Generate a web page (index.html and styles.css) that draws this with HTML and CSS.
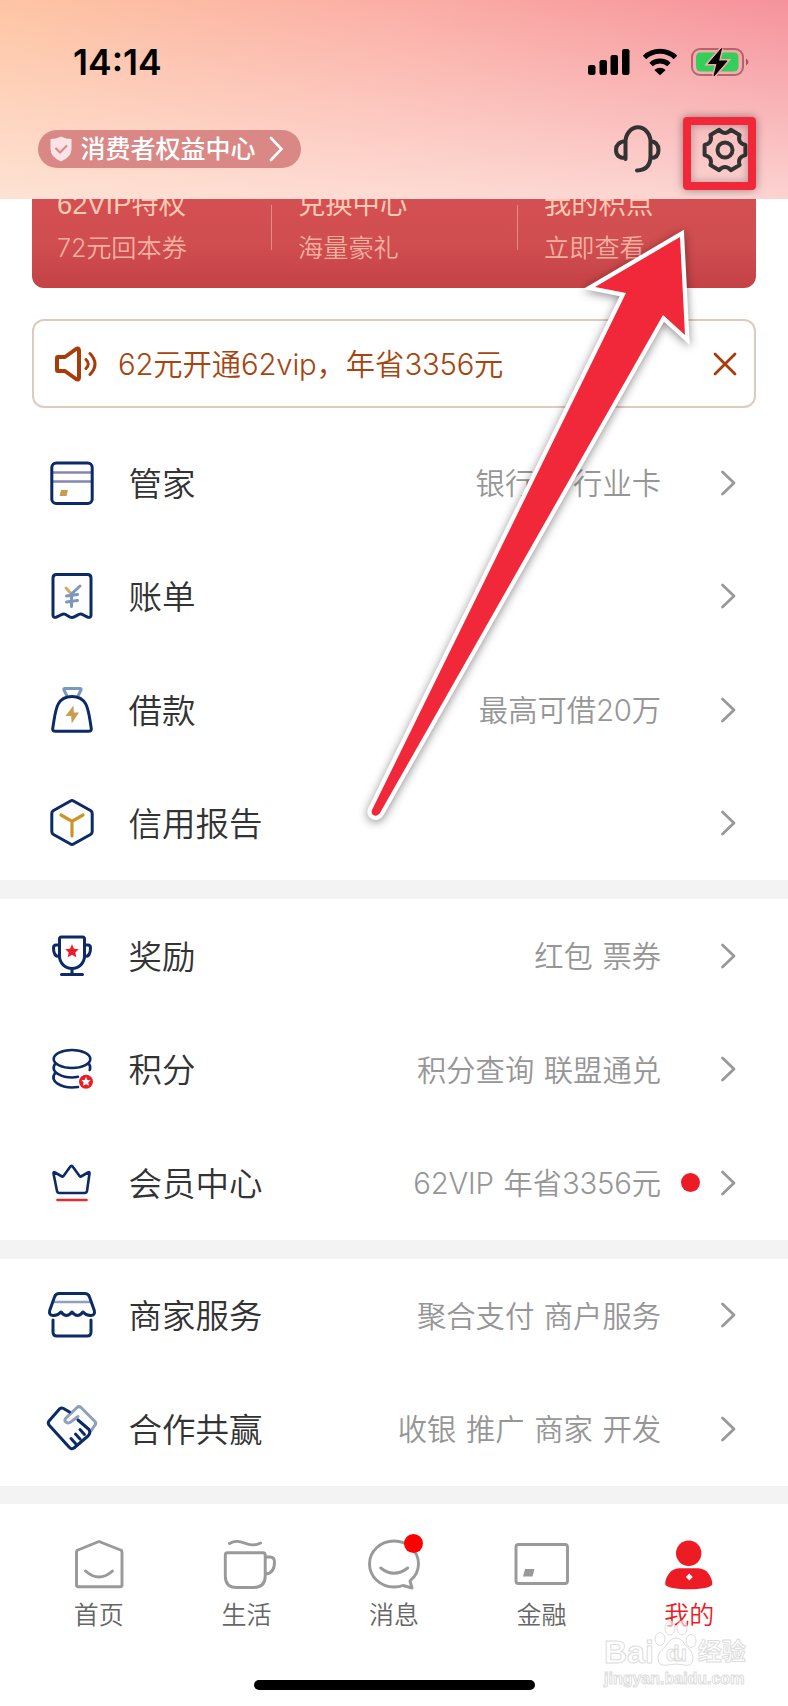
FILE: index.html
```html
<!DOCTYPE html>
<html lang="zh-CN">

<head>
    <meta charset="UTF-8">
    <meta name="viewport" content="width=device-width, initial-scale=1.0">
    <title>我的</title>
    <link rel="stylesheet" href="styles.css">
</head>

<body>
    <header class="header">
        <div class="status-bar">
            <span class="time">14:14</span>
            <svg class="status-icons" width="164" height="32" viewBox="586 46 164 32">
                <rect x="588" y="65" width="7.5" height="10" rx="2.2" />
                <rect x="599.5" y="60" width="7.5" height="15" rx="2.2" />
                <rect x="610.5" y="55" width="7.5" height="20" rx="2.2" />
                <rect x="622" y="49" width="7.5" height="26" rx="2.2" />
                <g fill="none" stroke="#000" stroke-width="5">
                    <path d="M644.5 57.5a22.5 22.5 0 0 1 31 0" />
                    <path d="M651 64.5a13.3 13.3 0 0 1 18 0" />
                </g>
                <path d="M654.3 70q5.700-4.600 11.400 0l-5.700 5.200z" />
                <rect x="692" y="49" width="51" height="26" rx="8" fill="none" stroke="#b0666b" stroke-width="2" />
                <rect x="696" y="52.500" width="42.500" height="19" rx="4.500" fill="#34cf5a" />
                <path d="M746 58.500q5 3.500 0 7z" fill="#a0595f" />
                <path d="M721.500 48.500L708.500 63.500h8.500l-3 12.500 13-15h-8.500z" stroke="#f3a8a6" stroke-width="4" />
                <path d="M721.500 48.500L708.500 63.500h8.500l-3 12.500 13-15h-8.500z" stroke="#000" stroke-linejoin="round" />
            </svg>
        </div>
        <div class="header-bar">
            <a class="rights">
                <svg width="22" height="26" viewBox="0 0 22 26">
                    <path d="M11 .5Q16 3 21.500 3v10q0 8-10.500 12.500Q.5 21 .5 13V3Q6 3 11 .5z" fill="#fbe3e6" />
                    <path d="M5.500 12l4.500 4.500 7-7" fill="none" stroke="#d98886" stroke-width="2" />
                </svg>
                <span>消费者权益中心</span>
                <svg width="14" height="26" viewBox="0 0 14 26">
                    <path d="M2 2l10.500 11L2 24" fill="none" stroke="#fff" stroke-width="2.600" stroke-linecap="round" />
                </svg>
            </a>
            <div class="tools">
                <svg width="50" height="50" viewBox="-25 -25 50 50">
                    <path d="M-11.500 9V-8A11.500 13.500 0 0 1 13.500-8V6Q13.500 20 0 20.500M-11.500-9Q-21-8-21 0T-11.500 8M13.500-9Q21.500-8 21.500 0T13.500 8" />
                </svg>
                <svg width="50" height="50" viewBox="-25 -25 50 50">
                    <path d="M20.400 5.100Q12.100 7 14.600 15.100L5.800 20.200Q0 14-5.800 20.200L-14.600 15.100Q-12.100 7-20.400 5.100V-5.100Q-12.100-7-14.600-15.100L-5.800-20.200Q0-14 5.800-20.200L14.600-15.100Q12.100-7 20.400-5.100z" />
                    <circle r="7.500" />
                </svg>
            </div>
        </div>
    </header>

    <main>
        <div class="vip-card">
            <div class="vip-item">
                <h3>62VIP特权</h3>
                <p><span class="num">72</span>元回本券</p>
            </div>
            <div class="vip-item">
                <h3>兑换中心</h3>
                <p>海量豪礼</p>
            </div>
            <div class="vip-item">
                <h3>我的积点</h3>
                <p>立即查看</p>
            </div>
        </div>

        <div class="notice">
            <svg width="46" height="36" viewBox="0 0 46 36" fill="none" stroke="#a93a0a" stroke-linecap="round" stroke-linejoin="round">
                <path d="M4 11h7L22 3q3-1.500 3 1.500v27q0 3-3 1.500L11 25H4q-1 0-1-1V12q0-1 1-1z" stroke-width="4" />
                <path d="M32 13.500q4.500 4.500 0 9M36 7.500q10 10.500 0 21" stroke-width="3" />
            </svg>
            <p><span class="num">62</span>元开通<span class="num">62vip</span>，年省<span class="num">3356</span>元</p>
            <svg width="24" height="24" viewBox="0 0 24 24">
                <path d="M2 2l20 20M22 2L2 22" stroke="#a93a0a" stroke-width="2.800" stroke-linecap="round" />
            </svg>
        </div>

        <section>
            <div class="row">
                <svg class="icon" viewBox="-28 -28 56 56">
                    <path d="M-19-10.500h38M-19-1.500h38" stroke="#8288b0" stroke-width="2.500" />
                    <rect x="-20.200" y="-20" width="40.400" height="40.400" rx="4.500" />
                    <path d="M-11 7h7l-1.500 6h-7z" fill="#c89c4c" stroke="none" />
                </svg>
                <span class="label">管家</span>
                <span class="value">银行卡 行业卡</span>
                <span class="mark"></span>
                <svg class="arrow" viewBox="0 0 16 26"><path d="M2.500 2L14 13 2.500 24" /></svg>
            </div>
            <div class="row">
                <svg class="icon" viewBox="-28 -28 56 56">
                    <path d="M-19 19V-18q0-3.500 3.500-3.500h31q3.500 0 3.500 3.500V19q0 3-3 2.200C12 20 11 18 8.500 18S3 21.500 0 21.500-5.500 18-8 18s-4 2-8 3.200q-3 .8-3-2.200z" />
                    <path d="M-6-8l5.500 6" stroke="#d5ab62" />
                    <path d="M8-10L-.5-2V10.500M-5.500 0l11-1.500M-5.500 6l11-1.500" stroke="#7b99bd" />
                </svg>
                <span class="label">账单</span>
                <span class="mark"></span>
                <svg class="arrow" viewBox="0 0 16 26"><path d="M2.500 2L14 13 2.500 24" /></svg>
            </div>
            <div class="row">
                <svg class="icon" viewBox="-28 -28 56 56">
                    <path d="M-5.500-15l-2.500-5q-.5-1.500 1-1.500H8q1.500 0 1 1.500L6.500-15" stroke="#7898bd" />
                    <path d="M-19.300 18.500C-16.500 3-17-13.500 0-13.500S16.500 3 19.300 18.500q.2 2.800-3 2.800h-32.600q-3.200 0-3-2.800z" />
                    <path d="M1.500-4.500L-6.500 6H-.8l.5 7.500L7 2.500H1.800z" fill="#c99d4c" stroke="none" />
                </svg>
                <span class="label">借款</span>
                <span class="value">最高可借<span class="num">20</span>万</span>
                <span class="mark"></span>
                <svg class="arrow" viewBox="0 0 16 26"><path d="M2.500 2L14 13 2.500 24" /></svg>
            </div>
            <div class="row">
                <svg class="icon" viewBox="-28 -28 56 56">
                    <path d="M-1.500-22q1.500-1 3 0L18.500-12.500q1.700 1 1.700 3V8.500q0 2-1.700 3L1.500 21q-1.500 1-3 0L-18.500 11.500q-1.700-1-1.700-3V-9.500q0-2 1.700-3z" />
                    <path d="M-11-8L0-1.700 11-8M0-1.700V13" stroke="#cd9426" stroke-width="3.200" />
                </svg>
                <span class="label">信用报告</span>
                <span class="mark"></span>
                <svg class="arrow" viewBox="0 0 16 26"><path d="M2.500 2L14 13 2.500 24" /></svg>
            </div>
        </section>

        <section>
            <div class="row">
                <svg class="icon" viewBox="-28 -28 56 56">
                    <path d="M-12.500-17q0-2 2-2h21q2 0 2 2V0A12.500 12.500 0 0 1-12.500 0zM0 12.500V18.500M-10.500 18.500h21" />
                    <path d="M-13-11h-3q-2.500 0-2.500 3Q-18.500.5-13 .5M13-11h3q2.500 0 2.500 3Q18.500.5 13 .5" />
                    <path d="M0-11.700l2 4.500 4.800.5-3.500 3.200 1 4.800L0-1.200-4.300 1.300l1-4.800-3.500-3.200 4.800-.5z" fill="#ed1c24" stroke="none" />
                </svg>
                <span class="label">奖励</span>
                <span class="value">红包 票券</span>
                <span class="mark"></span>
                <svg class="arrow" viewBox="0 0 16 26"><path d="M2.500 2L14 13 2.500 24" /></svg>
            </div>
            <div class="row">
                <svg class="icon" viewBox="-28 -28 56 56">
                    <g stroke-width="2.600">
                        <ellipse cy="-10" rx="18.300" ry="9" />
                        <path d="M-17-5C-23 4-8 8.500 0 8.500q3 0 6-.7M17-5q2 3 .7 6M-17 4C-23 13-10 18.500 0 18.500l6-.5" />
                    </g>
                    <circle cx="14" cy="12.700" r="7" fill="#ed1c24" stroke="none" />
                    <path d="M14 8l1.400 2.900 3.200.4-2.300 2.200.6 3.200-2.900-1.500-2.900 1.500.6-3.200-2.300-2.200 3.200-.4z" fill="#fff" stroke="none" />
                </svg>
                <span class="label">积分</span>
                <span class="value">积分查询 联盟通兑</span>
                <span class="mark"></span>
                <svg class="arrow" viewBox="0 0 16 26"><path d="M2.500 2L14 13 2.500 24" /></svg>
            </div>
            <div class="row">
                <svg class="icon" viewBox="-28 -28 56 56">
                    <path d="M-18.500-9.500q-.3-2 1.500-1l7 4q1 .5 1.500-.5l6.500-9q1.500-2.200 3 0l6.500 9q.5 1 1.500.5l7-4q1.800-1 1.500 1L15 8q-.4 2-2.400 2H-12.600q-2 0-2.400-2z" stroke-width="2.600" />
                    <path d="M-14.500 17h29" stroke="#e52a30" stroke-width="2.600" />
                </svg>
                <span class="label">会员中心</span>
                <span class="value"><span class="num">62VIP</span> 年省<span class="num">3356</span>元</span>
                <span class="mark"><i class="dot"></i></span>
                <svg class="arrow" viewBox="0 0 16 26"><path d="M2.500 2L14 13 2.500 24" /></svg>
            </div>
        </section>

        <section>
            <div class="row">
                <svg class="icon" viewBox="-28 -28 56 56">
                    <path d="M-18-13h36" stroke="#8ea0bd" stroke-width="2.600" />
                    <path d="M-12.500-21.500h25q4 0 5 3.500L22.300-4.500q1 4.500-3 5-4.800.5-8.300-3.500Q5.500 4 0-3-5.500 4-11-3-14.500 1-19.300.5q-4-.5-3-5L-17.500-18q1-3.500 5-3.500zM-19 5v12q0 4 4 4h30q4 0 4-4V5" />
                </svg>
                <span class="label">商家服务</span>
                <span class="value">聚合支付 商户服务</span>
                <span class="mark"></span>
                <svg class="arrow" viewBox="0 0 16 26"><path d="M2.500 2L14 13 2.500 24" /></svg>
            </div>
            <div class="row">
                <svg class="icon" viewBox="-28 -28 56 56">
                    <path d="M19 2l4-6q1.500-2 0-3.500L9-21.500q-2-1.700-4 0L-6.500-10.500Q-8-8-5.500-6.500T0-8L6-12.500" stroke="#8ea0bd" />
                    <path d="M-2.500-17l-6-3.500q-2-1-4 .5L-23-8q-1.500 2 0 4L-3 18q2 3 5 1L16 7q3-3 1-6.500L6-9M-1 9.500l4.500 5M3.500 5l4.500 5M8 .5l4.500 5" />
                </svg>
                <span class="label">合作共赢</span>
                <span class="value">收银 推广 商家 开发</span>
                <span class="mark"></span>
                <svg class="arrow" viewBox="0 0 16 26"><path d="M2.500 2L14 13 2.500 24" /></svg>
            </div>
        </section>
    </main>

    <nav class="tab-bar">
        <a class="tab">
            <svg viewBox="-30 -28 60 56">
                <path d="M-22.500-12q0-1.500 1.500-2L0-22.500 21.500-14q1.500.5 1.500 2V21q0 1.700-1.700 1.700h-42q-1.800 0-1.800-1.700zM-13.500 7Q0 19 13.500 7" />
            </svg>
            <span>首页</span>
        </a>
        <a class="tab">
            <svg viewBox="-30 -28 60 56">
                <path d="M-16.500-20.500c12-7 18 6 31-.5M-18.500-11.300h35.500q2.200 0 2.200 2.200V12q0 11.500-11.500 11.500h-17Q-20.700 23.500-20.700 12V-9.100q0-2.200 2.200-2.200zM20-7h4q4.500 0 4.500 5Q28.500 9 20 10" />
            </svg>
            <span>生活</span>
        </a>
        <a class="tab">
            <svg viewBox="-30 -28 60 56">
                <path d="M16 17Q24.500 10 24.500 0A24.500 23 0 1 0 0 23q5 0 9-1.500l9 2.500zM-13.300 4Q0 14.500 13.700 4" />
            </svg>
            <i class="badge"></i>
            <span>消息</span>
        </a>
        <a class="tab">
            <svg viewBox="-30 -28 60 56">
                <rect x="-26" y="-19.500" width="51.500" height="39" rx="2.500" />
                <path d="M-17 5h9.500l-2 7.500h-9.500z" fill="#999" stroke="none" />
            </svg>
            <span>金融</span>
        </a>
        <a class="tab active">
            <svg viewBox="-30 -28 60 56">
                <circle cx="-.3" cy="-10.700" r="12.700" />
                <path d="M-10 4.300H9.500C17.500 4.300 23.300 13 23.300 20 23.300 27-23.800 27-23.800 20-23.800 13-18 4.300-10 4.300z" />
                <path d="M.3 9.500L3.800 13 .3 16.500-3.200 13z" fill="#fff" />
            </svg>
            <span>我的</span>
        </a>
        <div class="home-indicator"></div>
    </nav>

    <!-- Annotations on top of the page -->
    <div class="highlight"></div>
    <svg class="pointer" width="360" height="620" viewBox="350 220 360 620">
        <path d="M680 237L685 335 663 315 380.500 812Q377 818 372.500 814.500 371 812.500 372 810L626 293 595 287z" fill="none" stroke="#fff" stroke-width="8.500" />
        <path d="M680 237L685 335 663 315 380.500 812Q377 818 372.500 814.500 371 812.500 372 810L626 293 595 287z" fill="#f0283a" />
    </svg>
    <div class="watermark">
        <div class="watermark-logo">
            <span>Bai</span>
            <svg width="44" height="50" viewBox="0 0 44 50">
                <ellipse cx="6" cy="19" rx="5" ry="6.500" />
                <ellipse cx="16" cy="8" rx="5" ry="7" />
                <ellipse cx="28" cy="8" rx="5" ry="7" />
                <ellipse cx="37" cy="21" rx="5" ry="6.500" />
                <path d="M22 18q6 0 9 7 8 6 8 13 0 9-9 7-8-2-16 0-10 2-10-7 0-6 8-12 4-8 10-8z" />
                <text x="12" y="41" textLength="21">du</text>
            </svg>
            <span>经验</span>
        </div>
        <div class="watermark-url">jingyan.baidu.com</div>
    </div>
</body>

</html>
```

FILE: styles.css
```css
* {
    margin: 0;
    padding: 0;
    box-sizing: border-box;
}

body {
    position: relative;
    width: 788px;
    height: 1706px;
    overflow: hidden;
    background-color: #fff;
    color: #333;
    font-family: "Liberation Sans", "Noto Sans CJK SC", sans-serif;
    font-weight: 350;
    word-spacing: 1.5px;
}

svg {
    display: block;
    flex-shrink: 0;
}

/* Header */
.header {
    height: 199px;
    background: linear-gradient(to bottom, rgba(254, 240, 232, 0), rgba(254, 240, 232, 0.7)),
        linear-gradient(100deg, #fec5a3, #fbada5 50%, #f58f9a);
}

.status-bar {
    display: flex;
    justify-content: space-between;
    align-items: center;
    height: 124px;
    padding: 0 38px 0 73px;
}

.time {
    padding-top: 1px;
    font-family: Inter, sans-serif;
    font-size: 35.5px;
    font-weight: 600;
    color: #000;
}

.header-bar {
    display: flex;
    justify-content: space-between;
    align-items: center;
    height: 50px;
    padding: 0 38px;
}

.rights {
    display: flex;
    align-items: center;
    width: 263px;
    height: 38px;
    padding-left: 12px;
    border-radius: 19px;
    background-color: #d98886;
    color: #fff;
    font-size: 25px;
    font-weight: 500;
    line-height: 34px;
}

.rights span {
    margin: 0 13.5px 0 8.5px;
}

.tools {
    display: flex;
    gap: 38px;
    padding-top: 1px;
}

.tools svg {
    fill: none;
    stroke: #333;
    stroke-width: 4;
    stroke-linecap: round;
    stroke-linejoin: round;
}

/* VIP card, its top is scrolled under the header */
.vip-card {
    display: flex;
    height: 89px;
    margin: 0 32px;
    overflow: hidden;
    border-radius: 0 0 12px 12px;
    background: linear-gradient(#d45052, #d04d50 50%, #c44246);
}

.vip-item {
    position: relative;
    flex-shrink: 0;
    width: 246px;
    padding-left: 27px;
    color: #fbc9b4;
    white-space: nowrap;
}

.vip-item:first-child {
    width: 239px;
    padding-left: 25px;
}

.vip-item + .vip-item::before {
    content: "";
    position: absolute;
    top: 6px;
    left: 0;
    width: 1px;
    height: 45px;
    background-color: #e58a86;
}

.vip-item h3 {
    height: 40px;
    margin-top: -14px;
    font-size: 27.3px;
    font-weight: 400;
    line-height: 40px;
}

.vip-item p {
    margin-top: 3px;
    color: #f4b09f;
    font-size: 25.2px;
    line-height: 40px;
}

/* Notice */
.notice {
    display: flex;
    align-items: center;
    height: 89px;
    margin: 31px 32px 18px;
    padding: 0 17px 0 20px;
    border: 2px solid #dfcabf;
    border-radius: 12px;
    color: #a5450f;
    font-size: 29.3px;
}

.notice p {
    flex: 1;
    margin-left: 18px;
    padding-bottom: 3px;
}

.num {
    font-family: Inter, "Liberation Sans", sans-serif;
    font-weight: 300;
    letter-spacing: -0.2px;
}

/* List rows */
section {
    border-bottom: 19px solid #f3f3f3;
}

section:last-child {
    border-bottom-width: 18px;
}

.row {
    display: flex;
    align-items: center;
    height: 113.5px;
    padding: 0 52px 0 43.5px;
}

.icon {
    width: 56px;
    height: 56px;
    fill: none;
    stroke: #0b2a66;
    stroke-width: 3;
    stroke-linecap: round;
    stroke-linejoin: round;
}

.label {
    flex: 1;
    margin-left: 29px;
    padding-bottom: 3px;
    font-size: 33.5px;
}

.value {
    padding-bottom: 3px;
    color: #969696;
    font-size: 29.3px;
}

.mark {
    display: flex;
    justify-content: center;
    width: 59px;
}

.dot {
    width: 19px;
    height: 19px;
    border-radius: 50%;
    background-color: #ed1c24;
}

.arrow {
    width: 16px;
    height: 26px;
    fill: none;
    stroke: #999;
    stroke-width: 2.8;
    stroke-linecap: round;
    stroke-linejoin: round;
}

/* Tab bar */
.tab-bar {
    position: relative;
    display: flex;
    height: 203px;
    padding: 32px 25px 0;
}

.tab {
    position: relative;
    display: flex;
    flex: 1;
    flex-direction: column;
    align-items: center;
    color: #666;
    font-size: 25px;
    line-height: 46px;
}

.tab svg {
    width: 60px;
    height: 56px;
    fill: none;
    stroke: #999;
    stroke-width: 2.9;
    stroke-linecap: round;
    stroke-linejoin: round;
}

.tab.active {
    color: #ed1c24;
}

.tab.active svg {
    fill: #ed1c24;
    stroke: none;
}

.badge {
    position: absolute;
    top: -2px;
    left: 84px;
    width: 19px;
    height: 19px;
    border-radius: 50%;
    background-color: #fe0000;
}

.home-indicator {
    position: absolute;
    left: 254px;
    bottom: 17px;
    width: 281px;
    height: 10px;
    border-radius: 5px;
    background-color: #000;
}

/* Annotations */
.highlight {
    position: absolute;
    top: 117px;
    left: 683px;
    width: 73px;
    height: 73px;
    border: 8px solid #f0283a;
    border-radius: 4px;
    box-shadow: 0 0 8px rgba(0, 0, 0, 0.4), inset 0 0 8px rgba(0, 0, 0, 0.3);
}

.pointer {
    position: absolute;
    top: 220px;
    left: 350px;
    filter: drop-shadow(0 2px 5px rgba(0, 0, 0, 0.45));
}

.watermark {
    position: absolute;
    top: 1622px;
    left: 604px;
    width: 142px;
    color: #fff;
    font-weight: 700;
    -webkit-text-stroke: 1px #ddd;
}

.watermark-logo {
    display: flex;
    align-items: flex-end;
    height: 48px;
    font-size: 32px;
    line-height: 36px;
}

.watermark-logo span:last-child {
    font-size: 24px;
}

.watermark-logo svg {
    fill: rgba(255, 255, 255, 0.6);
    stroke: #ddd;
    font-size: 22px;
}

.watermark-url {
    font-size: 16px;
    line-height: 18px;
}
```
